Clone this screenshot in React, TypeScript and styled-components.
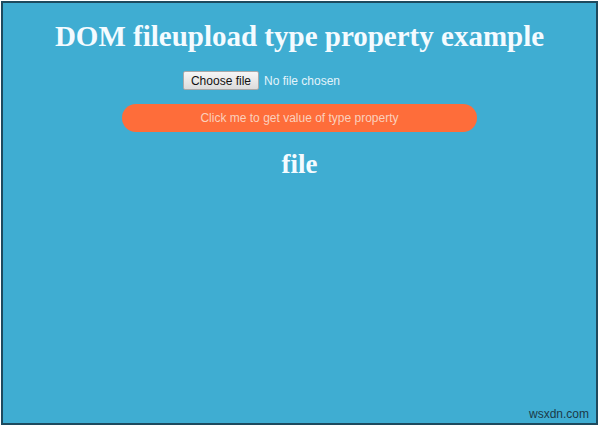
import React from "react";
import styled, { createGlobalStyle } from "styled-components";

const Global = createGlobalStyle`
  html, body { margin: 0; padding: 0; background: #ffffff; }
  body { width: 600px; height: 427px; overflow: hidden; }
`;

const Frame = styled.div`
  box-sizing: border-box;
  width: 597px;
  height: 424px;
  margin-left: 1px;
  margin-top: 1px;
  border: 2px solid #1d4a5e;
  background: #3fadd2;
  display: flex;
  flex-direction: column;
  align-items: center;
  position: relative;
  font-family: "Liberation Serif", "Times New Roman", serif;
  color: #ffffff;
`;

const Title = styled.h1`
  margin: 16px 0 0 0;
  font-size: 29px;
  line-height: 34px;
  font-weight: bold;
  text-align: center;
  color: #f4fbff;
`;

const UploadRow = styled.div`
  display: flex;
  align-items: center;
  gap: 5px;
  margin-top: 18px;
  margin-right: 76px;
  font-family: "Liberation Sans", Arial, sans-serif;
  font-size: 12px;
`;

const ChooseButton = styled.button`
  box-sizing: border-box;
  height: 19px;
  padding: 0 7px;
  font-family: "Liberation Sans", Arial, sans-serif;
  font-size: 12px;
  color: #111;
  background: linear-gradient(#f6f6f6, #dcdcdc);
  border: 1px solid #a9a9a9;
  border-radius: 2px;
`;

const NoFile = styled.span`
  color: #e3f4fb;
`;

const ActionButton = styled.button`
  box-sizing: border-box;
  width: 355px;
  height: 28px;
  margin-top: 14px;
  border: none;
  border-radius: 14px;
  background: #fe6d3a;
  color: #fbd0bd;
  font-family: "Liberation Sans", Arial, sans-serif;
  font-size: 12px;
`;

const Result = styled.h2`
  margin: 16px 0 0 0;
  font-size: 27px;
  line-height: 32px;
  font-weight: bold;
  color: #f4fbff;
`;

const Watermark = styled.span`
  position: absolute;
  right: 7px;
  bottom: 2px;
  font-family: "Liberation Sans", Arial, sans-serif;
  font-size: 12px;
  color: #1b3a48;
`;

export default function App() {
  return (
    <>
      <Global />
      <Frame>
        <Title>DOM fileupload type property example</Title>
        <UploadRow>
          <ChooseButton>Choose file</ChooseButton>
          <NoFile>No file chosen</NoFile>
        </UploadRow>
        <ActionButton>Click me to get value of type property</ActionButton>
        <Result>file</Result>
        <Watermark>wsxdn.com</Watermark>
      </Frame>
    </>
  );
}
